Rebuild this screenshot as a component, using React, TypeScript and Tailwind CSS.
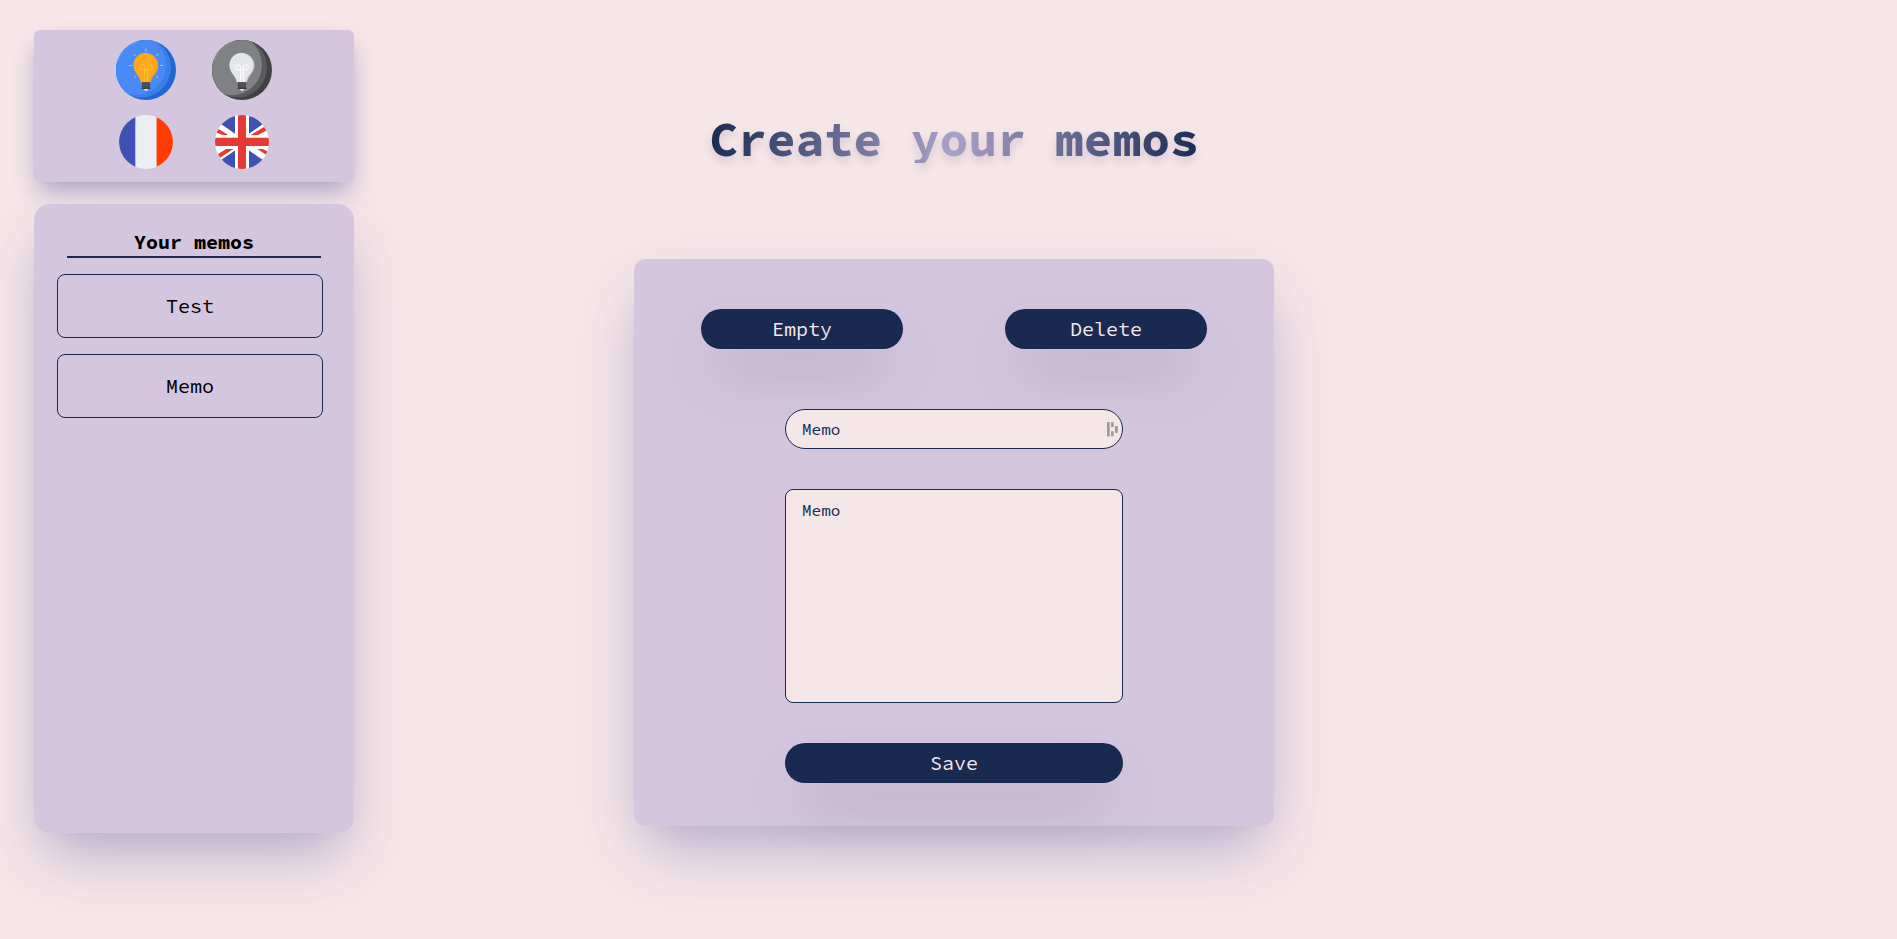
import type { ReactNode } from 'react';

type BulbProps = { dark: string; mid: string; light: string; bulb: string; shade: string; wire: string; rays?: boolean };

function Bulb({ dark, mid, light, bulb, shade, wire, rays }: BulbProps) {
  const id = `disc-${light.slice(1)}`;
  return (
    <svg viewBox="0 0 60 60" className="size-[60px]">
      <clipPath id={id}><circle cx="30" cy="30" r="30" /></clipPath>
      <g clipPath={`url(#${id})`}>
        <rect width="60" height="60" fill={dark} />
        <circle cx="25" cy="27.5" r="30" fill={mid} />
        <circle cx="20" cy="25" r="30" fill={light} />
        <path d="M1.500 22A30 30 0 0 1 21 1.500" fill="none" stroke="#fff" strokeOpacity=".12" strokeWidth="2" />
      </g>
      {rays && (
        <path d="M30 8.700v3M13 25.500h3M44 25.500h3M18 14l2 2.200M42 14l-2 2.200M18 38l2-2.200M42 38l-2-2.200" stroke="#d9c455" strokeWidth="1" fill="none" />
      )}
      <path d="M30 13a12.400 12.400 0 0 0-12.400 12.400c0 7.600 6.400 9.600 7.400 16.800h10c1-7.200 7.400-9.200 7.400-16.800A12.400 12.400 0 0 0 30 13z" fill={shade} />
      <path d="M29 13a12 12 0 0 0-11.400 12.400c0 7.600 6.400 9.600 7.400 16.800h8.500c1-7.200 7.200-9.200 7.200-16.800A12 12 0 0 0 29 13z" fill={bulb} />
      <path d="M28.600 42V27.500a2.500 2.500 0 1 0-2.500 2.200h7.800a2.500 2.500 0 1 0-2.500-2.200V42" fill="none" stroke={wire} strokeWidth=".9" />
      <path d="M25.800 42.100h8.400v6.900h-8.400z" fill="#4d4f52" />
      <path d="M25.800 47.700h8.400V49h-8.400z" fill="#3c3d40" />
      <path d="M28 49h4.200l-.9 1.700h-2.400z" fill="#e3e5e8" />
    </svg>
  );
}

function FrenchFlag() {
  return (
    <svg viewBox="0 0 60 60" className="size-[60px]">
      <clipPath id="fr"><circle cx="30" cy="30" r="27" /></clipPath>
      <g clipPath="url(#fr)">
        <rect width="60" height="60" fill="#eceff1" />
        <rect width="19.3" height="60" fill="#3f51b5" />
        <rect x="40.6" width="20" height="60" fill="#ff3d00" />
      </g>
    </svg>
  );
}

function BritishFlag() {
  return (
    <svg viewBox="0 0 60 60" className="size-[60px]">
      <clipPath id="gb"><circle cx="30" cy="30" r="27" /></clipPath>
      <g clipPath="url(#gb)">
        <rect width="60" height="60" fill="#fff" />
        <path d="M23 0v21.700L9 12V0zM37 0v21.700L51 12V0zM23 60V38.500L9 48v12zM37 60V38.500L51 48v12z" fill="#3f51b5" />
        <path d="M4 20.500 6.600 17l9.700 6h-5.600zM38.700 23 52.300 14.800l2.500 3.700L46 23zM5.500 42.500 14 37h7.300L8 45.800zM45.300 37h5.500l6 3-2.300 3z" fill="#e53935" />
        <path d="M26 0h8v25.800h26V34H34v26h-8V34H0v-8.200h26z" fill="#e53935" />
      </g>
    </svg>
  );
}

function Pill({ children, className }: { children: ReactNode; className: string }) {
  return (
    <button className={`h-10 rounded-[20px] bg-[#182a50] text-[20px] leading-10 text-[#f5e6e8] shadow-[0_30px_60px_-12px_rgba(0,0,0,0.28)] ${className}`}>
      {children}
    </button>
  );
}

export default function App() {
  return (
    <div className="flex h-[939px] w-[1897px] overflow-hidden bg-[#f5e6e8] font-['Source_Code_Pro','DejaVu_Sans_Mono',monospace] text-black">
      <aside className="ml-[34px] flex w-[320px] shrink-0 flex-col gap-[22px] pt-[30px]">
        <div className="grid h-[152px] grid-cols-[60px_60px] content-start justify-center gap-x-9 gap-y-3 rounded-md bg-[#d5c6e0] pt-[10px] shadow-[0_13px_27px_-5px_#aaa1c8,0_8px_16px_-8px_rgba(0,0,0,0.1)]">
          <Bulb dark="#2266d5" mid="#3a7fe3" light="#488bf8" bulb="#ffa81e" shade="#f39a1d" wire="#ffc42c" rays />
          <Bulb dark="#414143" mid="#5a5b5d" light="#808184" bulb="#e5e6e8" shade="#cfd1d4" wire="#ffffff" />
          <FrenchFlag />
          <BritishFlag />
        </div>
        <div className="h-[629px] rounded-2xl bg-[#d5c6e0] pt-6 shadow-[0_30px_60px_-12px_rgba(170,161,200,0.85),0_18px_36px_-18px_rgba(0,0,0,0.08)]">
          <h2 className="mx-auto h-[30px] w-[254px] border-b-2 border-[#182a50] text-center text-[20px] leading-[27px] font-bold">Your memos</h2>
          <ul className="mt-4 ml-[23px] flex w-[266px] flex-col gap-4 text-center text-[20px]">
            <li className="h-16 rounded-lg border border-[#182a50] leading-[62px]">Test</li>
            <li className="h-16 rounded-lg border border-[#182a50] leading-[62px]">Memo</li>
          </ul>
        </div>
      </aside>
      <main className="ml-[280px] flex w-[640px] flex-col items-center pt-[115px]">
        <h1 className="h-12 bg-[linear-gradient(100deg,#182a50,#aaa1c8_50%,#182a50)] bg-clip-text text-[48px] leading-none font-bold text-transparent drop-shadow-[0_5px_4px_rgba(110,80,130,0.2)]">Create your memos</h1>
        <form className="mt-24 flex h-[567px] w-full flex-col items-center rounded-xl bg-[#d5c6e0] pt-[50px] shadow-[0_30px_60px_-12px_rgba(170,161,200,0.85),0_18px_36px_-18px_rgba(0,0,0,0.08)]">
          <div className="flex w-[506px] justify-between">
            <Pill className="w-[202px]">Empty</Pill>
            <Pill className="w-[202px]">Delete</Pill>
          </div>
          <div className="mt-[60px] flex h-10 w-[338px] items-center justify-between rounded-[20px] border border-[#182a50] bg-[#f5e6e8] pr-1 pl-4 text-[16px] text-[#182a50]">
            <span>Memo</span>
            <svg viewBox="0 0 12 16" className="h-4 w-3 fill-[#a09998]">
              <rect x="1" y="1" width="2.7" height="14.5" rx=".6" />
              <rect x="5" y="1" width="2.7" height="5" rx=".6" />
              <rect x="5" y="10.3" width="2.7" height="5" rx=".6" />
              <rect x="9" y="5" width="2.7" height="7" rx=".6" />
            </svg>
          </div>
          <div className="mt-10 h-[214px] w-[338px] rounded-lg border border-[#182a50] bg-[#f5e6e8] px-4 py-[10px] text-[16px] leading-5 text-[#182a50]">Memo</div>
          <Pill className="mt-10 w-[338px]">Save</Pill>
        </form>
      </main>
    </div>
  );
}
